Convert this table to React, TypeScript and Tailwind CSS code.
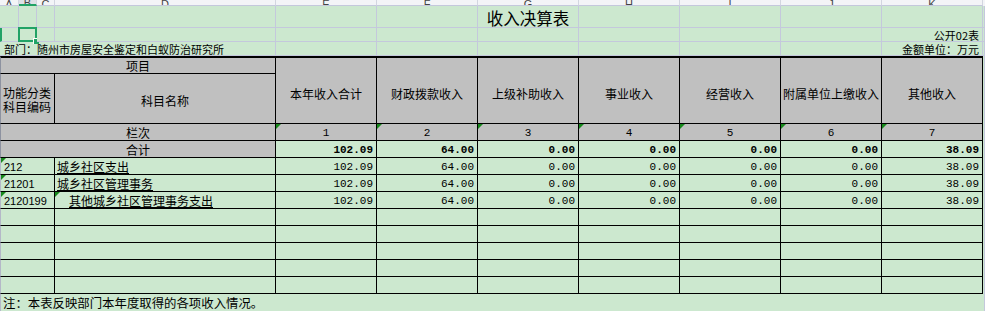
import type { ReactNode } from 'react'

const heads = ['本年收入合计', '财政拨款收入', '上级补助收入', '事业收入', '经营收入', '附属单位上缴收入', '其他收入']
const totals = ['102.09', '64.00', '0.00', '0.00', '0.00', '0.00', '38.09']
const rows = [
  { code: '212', name: '城乡社区支出', indent: false, mark: false },
  { code: '21201', name: '城乡社区管理事务', indent: false, mark: false },
  { code: '2120199', name: '其他城乡社区管理事务支出', indent: true, mark: true },
]
const letters = ['A', 'B', 'C', 'D', 'E', 'F', 'G', 'H', 'I', 'J', 'K']

function Tri() {
  return <span className="absolute left-0 top-0 h-0 w-0 border-r-[5px] border-t-[5px] border-r-transparent border-t-[#17891c]" />
}

function Grid({ className = '', children }: { className?: string; children?: ReactNode }) {
  return <div className={`border-b border-r border-[#c4c8dc] bg-[#cce8cf] ${className}`}>{children}</div>
}

function Cell({ className = '', children }: { className?: string; children?: ReactNode }) {
  return <div className={`relative flex border-b border-r border-black ${className}`}>{children}</div>
}

export default function App() {
  return (
    <div className="h-[311px] w-[985px] overflow-hidden bg-[#cce8cf] font-['Noto_Sans_CJK_SC',sans-serif] text-black">
      <div className="grid grid-cols-[19px_18px_18px_221px_repeat(7,101px)_2px] grid-rows-[6px_22px_14px_14px_18px_50px_17px_17px_repeat(8,17px)_17px]">
        {/* column letters, top half cut off */}
        {letters.map((l) => (
          <div
            key={l}
            className={`flex items-end justify-center overflow-hidden border-r border-[#d3d6e0] ${
              l === 'B' ? 'border-b-2 border-b-[#21a366] bg-[#dde1e6]' : 'border-b border-b-[#c4c8dc] bg-[#f3f4f7]'
            }`}
          >
            <span className="-mb-[5px] font-['Liberation_Sans',sans-serif] text-[11px] leading-[11px] text-[#444]">{l}</span>
          </div>
        ))}
        <div className="bg-[#f3f4f7]" />

        {/* row 1: title */}
        {letters.map((l) => (
          <Grid key={l} className={l === 'G' ? 'flex items-end justify-center' : ''}>
            {l === 'G' && <span className="whitespace-nowrap text-[16.5px] leading-[18px]">收入决算表</span>}
          </Grid>
        ))}
        <Grid />

        {/* row 2 */}
        {letters.map((l) => (
          <Grid
            key={l}
            className={`relative ${l === 'A' ? 'border-l-2 border-l-[#21a366]' : ''} ${l === 'K' ? 'flex items-end justify-end pr-[3px]' : ''}`}
          >
            {l === 'B' && (
              <>
                <span className="absolute -inset-[1px] border-[2.5px] border-[#21a366]" />
                <span className="absolute -bottom-[3px] -right-[3px] h-[6px] w-[6px] border-l border-t border-white bg-[#21a366]" />
              </>
            )}
            {l === 'K' && <span className="whitespace-nowrap text-[11px] leading-[12px]">公开02表</span>}
          </Grid>
        ))}
        <Grid />

        {/* row 3 */}
        <Grid className="col-span-4 flex items-end pl-[4px]">
          <span className="whitespace-nowrap text-[11px] leading-[12px]">部门：随州市房屋安全鉴定和白蚁防治研究所</span>
        </Grid>
        {letters.slice(4, 10).map((l) => (
          <Grid key={l} />
        ))}
        <Grid className="flex items-end justify-end pr-[3px]">
          <span className="whitespace-nowrap text-[11px] leading-[12px]">金额单位：万元</span>
        </Grid>
        <Grid />

        {/* table header */}
        <Cell className="col-span-4 items-end justify-center border-l border-t-2 border-l-[#8d92a0] bg-[#c0c0c0]">
          <span className="text-[12px] leading-[15px]">项目</span>
        </Cell>
        {heads.map((h) => (
          <Cell key={h} className="row-span-2 items-center justify-center border-t-2 bg-[#c0c0c0] pt-[5px]">
            <span className="whitespace-nowrap text-[12px] leading-[15px]">{h}</span>
          </Cell>
        ))}
        <div className="row-span-13 border-r border-[#c4c8dc] bg-[#cce8cf]" />

        <Cell className="col-span-3 items-center border-l border-l-[#8d92a0] bg-[#c0c0c0] pl-[2px] pt-[3px]">
          <span className="text-[12px] leading-[14px]">
            功能分类
            <br />
            科目编码
          </span>
        </Cell>
        <Cell className="items-center justify-center bg-[#c0c0c0] pt-[3px]">
          <span className="text-[12px] leading-[15px]">科目名称</span>
        </Cell>

        {/* 栏次 */}
        <Cell className="col-span-4 items-end justify-center border-l border-l-[#8d92a0] bg-[#c0c0c0]">
          <span className="text-[12px] leading-[15px]">栏次</span>
        </Cell>
        {heads.map((h, i) => (
          <Cell key={h} className="items-end justify-center bg-[#c0c0c0] pb-[1px]">
            <Tri />
            <span className="font-['Liberation_Mono',monospace] text-[11px] leading-[12px]">{i + 1}</span>
          </Cell>
        ))}

        {/* 合计 */}
        <Cell className="col-span-4 items-end justify-center border-l border-l-[#8d92a0] bg-[#c0c0c0]">
          <span className="text-[12px] leading-[15px]">合计</span>
        </Cell>
        {totals.map((v, i) => (
          <Cell key={i} className="items-end justify-end pb-[1px] pr-[3px]">
            <span className="font-['Liberation_Mono',monospace] text-[11px] font-bold leading-[12px]">{v}</span>
          </Cell>
        ))}

        {/* data rows */}
        {rows.map((r) => (
          <div key={r.code} className="contents">
            <Cell className="col-span-3 items-end border-l border-l-[#b4b8c8] pb-[1px] pl-[3px]">
              <Tri />
              <span className="font-['Liberation_Sans',sans-serif] text-[11px] leading-[12px]">{r.code}</span>
            </Cell>
            <Cell className={`items-end ${r.indent ? 'pl-[14px]' : 'pl-[2px]'}`}>
              {r.mark && <Tri />}
              <span className="whitespace-nowrap text-[12px] leading-[15px] underline underline-offset-[1px]">{r.name}</span>
            </Cell>
            {totals.map((v, i) => (
              <Cell key={i} className="items-end justify-end pb-[1px] pr-[3px]">
                <span className="font-['Liberation_Mono',monospace] text-[11px] leading-[12px]">{v}</span>
              </Cell>
            ))}
          </div>
        ))}

        {/* empty rows */}
        {[0, 1, 2, 3, 4].map((n) => (
          <div key={n} className="contents">
            <Cell className="col-span-3 border-l border-l-[#b4b8c8]" />
            <Cell />
            {heads.map((h) => (
              <Cell key={h} />
            ))}
          </div>
        ))}

        {/* note */}
        <div className="col-span-11 flex items-end border-l border-[#b4b8c8] pl-[2px]">
          <span className="whitespace-nowrap text-[12.4px] leading-[15px]">注：本表反映部门本年度取得的各项收入情况。</span>
        </div>
      </div>
    </div>
  )
}
